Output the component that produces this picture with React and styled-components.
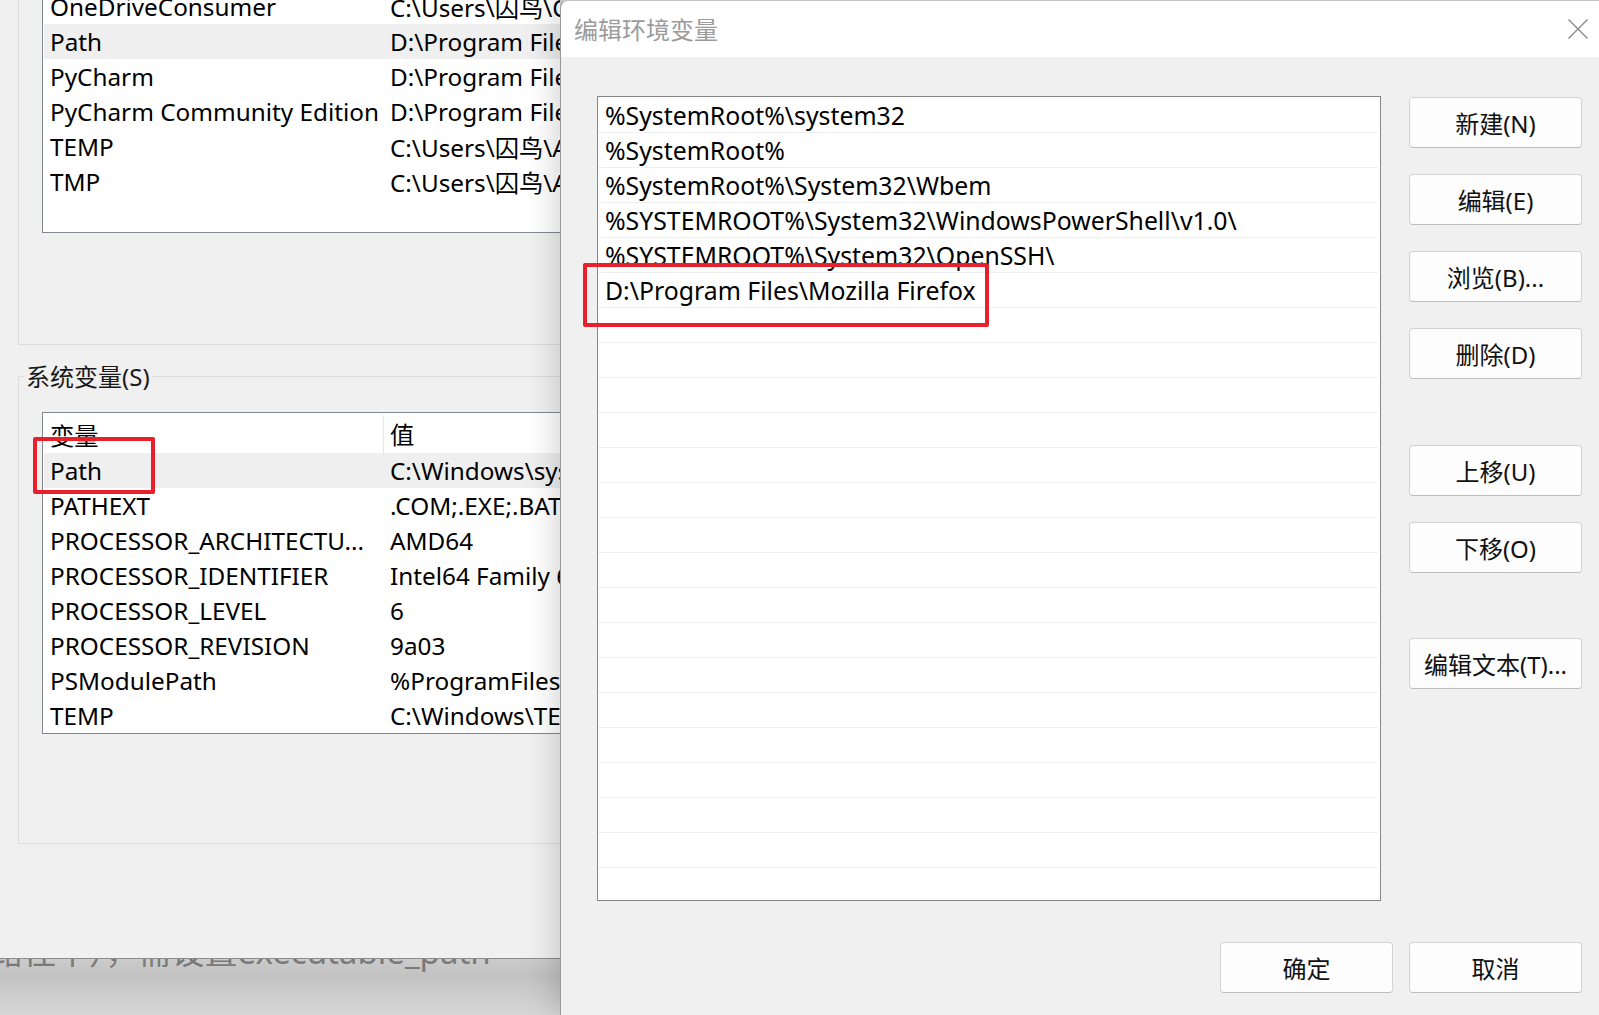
import React from 'react';
import styled, { createGlobalStyle } from 'styled-components';

const GlobalStyle = createGlobalStyle`
  html, body { margin: 0; padding: 0; background: #d0d0d0; }
  body { font-family: "Noto Sans", "Noto Sans CJK SC", sans-serif; }
  * { box-sizing: border-box; }
`;

const FONT = `"Noto Sans", "Noto Sans CJK SC", sans-serif`;

const Screen = styled.div`
  width: 1599px;
  height: 1015px;
  overflow: hidden;
  display: flex;
  font-family: ${FONT};
`;

const LeftColumn = styled.div`
  width: 560px;
  flex: none;
  display: flex;
  flex-direction: column;
`;

const EnvWindow = styled.div`
  height: 959px;
  flex: none;
  background: #f0f0f0;
  border-bottom: 1px solid #8c8c8c;
  overflow: hidden;
  padding-left: 18px;
  display: flex;
  flex-direction: column;
`;

const Group = styled.div`
  width: 620px;
  border: 1px solid #dcdcdc;
  border-right: none;
  ${(p) => (p.$open ? 'border-top: none;' : '')}
  margin-top: ${(p) => p.$mt}px;
  padding: 0 0 ${(p) => p.$pb}px 23px;
`;

const Legend = styled.div`
  width: fit-content;
  margin: -18px 0 0 -18px;
  padding: 0 2px;
  background: #f0f0f0;
  font-size: 24px;
  line-height: 35px;
  color: #1a1a1a;
`;

const TableBox = styled.div`
  background: #fff;
  border: 1px solid #828790;
  border-right: none;
  height: ${(p) => p.$h}px;
  margin-top: ${(p) => p.$mt || 0}px;
`;

const Row = styled.div`
  position: relative;
  display: grid;
  grid-template-columns: 340px 1fr;
  height: ${(p) => (p.$head ? 40 : 35)}px;
  margin-left: 1px;
  background: ${(p) => (p.$sel ? '#efefef' : 'transparent')};
  font-size: 24.3px;
  color: #000;
`;

const Cell = styled.div`
  display: flex;
  align-items: center;
  padding-left: 6px;
  white-space: nowrap;
  overflow: hidden;
  ${(p) => (p.$sep ? 'border-right: 1px solid #e5e5e5; margin: 2px 0 0;' : '')}
`;

const Highlight = styled.div`
  position: absolute;
  border: 4px solid #e8202c;
  border-radius: 2px;
  left: ${(p) => p.$l}px;
  top: ${(p) => p.$t}px;
  width: ${(p) => p.$w}px;
  height: ${(p) => p.$h}px;
  pointer-events: none;
  z-index: 2;
`;

const PageStrip = styled.div`
  flex: 1;
  overflow: hidden;
  background: linear-gradient(to bottom, #cbcbcb 0%, #c2c2c2 30%, #cdcdcd 65%, #d6d6d6 100%);
`;

const PageText = styled.div`
  margin: -27px 0 0 -10px;
  font-size: 33px;
  line-height: 40px;
  color: #7a7a7a;
  white-space: nowrap;
`;

const Dialog = styled.div`
  position: relative;
  z-index: 1;
  flex: 1;
  display: flex;
  flex-direction: column;
  background: #f0f0f0;
  border-left: 1px solid #999;
  border-top: 1px solid #c4c4c4;
  border-top-left-radius: 8px;
  box-shadow: -6px 0 30px rgba(0, 0, 0, 0.16);
`;

const TitleBar = styled.div`
  height: 56px;
  flex: none;
  background: #fff;
  border-top-left-radius: 8px;
  display: flex;
  align-items: center;
  justify-content: space-between;
  padding: 0 11px 0 13px;
`;

const Title = styled.div`
  font-size: 24px;
  color: #9b9b9b;
  margin-top: -2px;
`;

const CloseIcon = () => (
  <svg width="20" height="20" viewBox="0 0 20 20">
    <path d="M0.5 0.5 L19.5 19.5 M19.5 0.5 L0.5 19.5" stroke="#8a8a8a" strokeWidth="1.4" fill="none" />
  </svg>
);

const Body = styled.div`
  flex: 1;
  display: grid;
  grid-template-columns: 784px 173px;
  grid-template-rows: 805px 51px;
  column-gap: 28px;
  row-gap: 41px;
  padding: 39px 17px 0 36px;
`;

const ListBox = styled.div`
  position: relative;
  background: #fff;
  border: 1px solid #868686;
`;

const ListInner = styled.div`
  height: 100%;
  overflow: hidden;
  padding-top: 1px;
`;

const ListRow = styled.div`
  height: 35px;
  margin-right: 2px;
  border-bottom: 1px solid #efefef;
  display: flex;
  align-items: center;
  padding-left: 7px;
  font-size: 24.8px;
  color: #000;
  white-space: nowrap;
`;

const ButtonColumn = styled.div`
  display: flex;
  flex-direction: column;
  gap: 26px;
  padding-top: 1px;
`;

const Button = styled.button`
  height: 51px;
  width: 173px;
  flex: none;
  margin-top: ${(p) => p.$extra || 0}px;
  background: #fdfdfd;
  border: 1px solid #d2d2d2;
  border-bottom-color: #bdbdbd;
  border-radius: 4px;
  font-family: ${FONT};
  font-size: 24px;
  color: #111;
  padding: 0;
  display: flex;
  align-items: center;
  justify-content: center;
`;

const Footer = styled.div`
  grid-column: 1 / span 2;
  display: flex;
  justify-content: flex-end;
  gap: 16px;
`;

const userVars = [
  ['OneDriveConsumer', 'C:\\Users\\囚鸟\\OneDrive'],
  ['Path', 'D:\\Program Files\\Python'],
  ['PyCharm', 'D:\\Program Files\\JetBrains'],
  ['PyCharm Community Edition', 'D:\\Program Files\\JetBrains'],
  ['TEMP', 'C:\\Users\\囚鸟\\AppData\\Local\\Temp'],
  ['TMP', 'C:\\Users\\囚鸟\\AppData\\Local\\Temp'],
];

const sysVars = [
  ['Path', 'C:\\Windows\\system32;C:\\Windows'],
  ['PATHEXT', '.COM;.EXE;.BAT;.CMD;.VBS'],
  ['PROCESSOR_ARCHITECTU...', 'AMD64'],
  ['PROCESSOR_IDENTIFIER', 'Intel64 Family 6 Model 154'],
  ['PROCESSOR_LEVEL', '6'],
  ['PROCESSOR_REVISION', '9a03'],
  ['PSModulePath', '%ProgramFiles%\\WindowsPowerShell'],
  ['TEMP', 'C:\\Windows\\TEMP'],
];

const paths = [
  '%SystemRoot%\\system32',
  '%SystemRoot%',
  '%SystemRoot%\\System32\\Wbem',
  '%SYSTEMROOT%\\System32\\WindowsPowerShell\\v1.0\\',
  '%SYSTEMROOT%\\System32\\OpenSSH\\',
  'D:\\Program Files\\Mozilla Firefox',
];

const TOTAL_ROWS = 23;

export default function App() {
  const listRows = Array.from({ length: TOTAL_ROWS }, (_, i) => paths[i] || '');
  return (
    <>
      <GlobalStyle />
      <Screen>
        <LeftColumn>
          <EnvWindow>
            <Group $open $mt={-12} $pb={111}>
              <TableBox $h={245}>
                {userVars.map(([k, v]) => (
                  <Row key={k} $sel={k === 'Path'}>
                    <Cell>{k}</Cell>
                    <Cell>{v}</Cell>
                  </Row>
                ))}
              </TableBox>
            </Group>
            <Group $mt={31} $pb={109}>
              <Legend>系统变量(S)</Legend>
              <TableBox $h={322} $mt={18}>
                <Row $head>
                  <Cell $sep>变量</Cell>
                  <Cell>值</Cell>
                </Row>
                {sysVars.map(([k, v]) => (
                  <Row key={k} $sel={k === 'Path'}>
                    <Cell>{k}</Cell>
                    <Cell>{v}</Cell>
                    {k === 'Path' && <Highlight $l={-11} $t={-16} $w={122} $h={57} />}
                  </Row>
                ))}
              </TableBox>
            </Group>
          </EnvWindow>
          <PageStrip>
            <PageText>路径中），需设置executable_path</PageText>
          </PageStrip>
        </LeftColumn>
        <Dialog>
          <TitleBar>
            <Title>编辑环境变量</Title>
            <CloseIcon />
          </TitleBar>
          <Body>
            <ListBox>
              <ListInner>
                {listRows.map((p, i) => (
                  <ListRow key={i}>{p}</ListRow>
                ))}
              </ListInner>
              <Highlight $l={-15} $t={166} $w={406} $h={64} />
            </ListBox>
            <ButtonColumn>
              <Button>新建(N)</Button>
              <Button>编辑(E)</Button>
              <Button>浏览(B)...</Button>
              <Button>删除(D)</Button>
              <Button $extra={40}>上移(U)</Button>
              <Button>下移(O)</Button>
              <Button $extra={39}>编辑文本(T)...</Button>
            </ButtonColumn>
            <Footer>
              <Button>确定</Button>
              <Button>取消</Button>
            </Footer>
          </Body>
        </Dialog>
      </Screen>
    </>
  );
}
